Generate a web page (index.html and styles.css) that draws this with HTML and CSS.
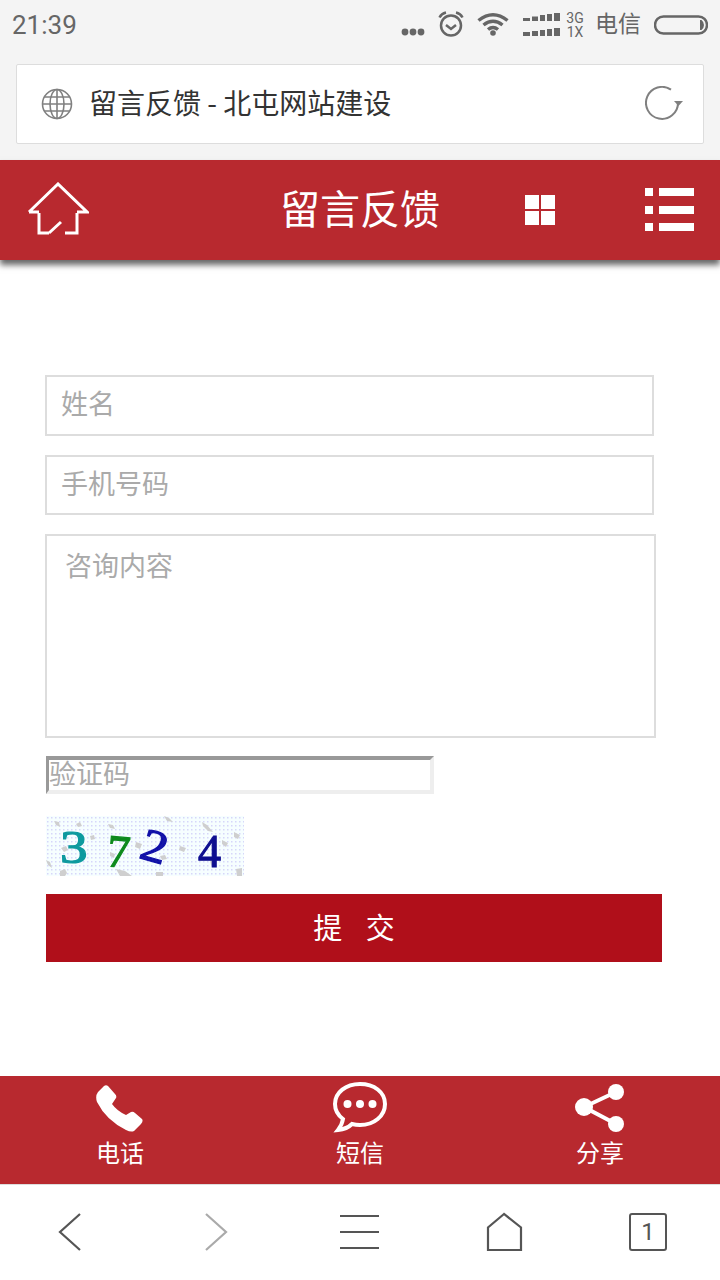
FILE: index.html
```html
<!doctype html>
<html lang="zh-CN">
  <head>
    <meta charset="UTF-8" />
    <meta name="viewport" content="width=device-width, initial-scale=1.0" />
    <title>留言反馈 - 北屯网站建设</title>
    <link rel="stylesheet" href="styles.css">
  </head>
  <body>
    <div class="chrome">
      <div class="status-bar">
        <span class="time">21:39</span>
        <div class="status-icons">
          <svg class="ic-dots" width="24" height="8" viewBox="0 0 24 8"><circle cx="4" cy="4" r="3.4"/><circle cx="12" cy="4" r="3.4"/><circle cx="20" cy="4" r="3.4"/></svg>
          <svg class="ic-alarm" width="26" height="26" viewBox="0 0 26 26"><circle cx="13" cy="14.500" r="10"/><path d="M8 14l5 4 5-4"/><path d="M1.500 6.500Q3.500 2.500 8 1.500M24.500 6.500Q22.500 2.500 18 1.500"/></svg>
          <svg class="ic-wifi" width="32" height="24" viewBox="0 0 32 24"><path d="M1.500 8.500Q16-3 30.500 8.500M6.500 13Q16 5.500 25.500 13M11 17.500Q16 13.500 21 17.500"/><circle cx="16" cy="21" r="2.800"/></svg>
          <svg class="ic-signal" width="38" height="24" viewBox="0 0 38 24"><path d="M0 8h7V5H0zM9 8h6V3.500H9zM17 8h5V2h-5zM24 8h5V1h-5zM31 8h6V0h-6zM0 23h7v-4H0zM9 23h6v-5H9zM17 23h5v-6h-5zM24 23h5v-7h-5zM31 23h6v-8h-6z"/></svg>
          <span class="net"><span>3G</span><span>1X</span></span>
          <span class="carrier">电信</span>
          <svg class="ic-battery" width="54" height="20" viewBox="0 0 54 20"><rect x="1" y="1.500" width="52" height="17" rx="8.500"/><path class="fill" d="M46 5h1.500Q50 7 50 10t-2.500 5H46z"/></svg>
        </div>
      </div>
      <div class="url-bar">
        <svg class="ic-globe" width="32" height="32" viewBox="0 0 32 32"><circle cx="16" cy="16" r="14.500"/><ellipse cx="16" cy="16" rx="7" ry="14.500"/><path d="M16 1.500v29M1.500 16h29M3.500 9h25M3.500 23h25"/></svg>
        <span class="url-title">留言反馈 - 北屯网站建设</span>
        <svg class="ic-reload" width="38" height="36" viewBox="0 0 38 36"><path d="M33 17A16 16 0 1 1 26 3.700"/><path class="fill" d="M29 15h9l-4.500 5z"/></svg>
      </div>
    </div>

    <header class="top-bar">
      <svg class="ic-home" width="62" height="54" viewBox="0 0 62 54"><path d="M22 51l12-11M12 31v20h10M50 31v20H38M2 30h10M50 30h10L31 2 2 30"/></svg>
      <h1>留言反馈</h1>
      <svg class="ic-grid" width="30" height="30" viewBox="0 0 30 30"><path d="M0 0h14v14H0zM16 0h14v14H16zM0 16h14v14H0zM16 16h14v14H16z"/></svg>
      <svg class="ic-list" width="50" height="44" viewBox="0 0 50 44"><path d="M0 0h8v8H0zM14 0h35v8H14zM0 18h8v8H0zM14 18h35v8H14zM0 35h8v8H0zM14 35h35v8H14z"/></svg>
    </header>

    <main class="content">
      <form class="feedback">
        <input class="field field-name" type="text" placeholder="姓名" />
        <input class="field field-phone" type="text" placeholder="手机号码" />
        <textarea class="field field-msg" placeholder="咨询内容"></textarea>
        <input class="field-code" type="text" placeholder="验证码" />
        <svg class="captcha" width="198" height="60" viewBox="0 0 198 60">
          <defs>
            <pattern id="dots" width="4" height="4" patternUnits="userSpaceOnUse">
              <rect width="4" height="4" fill="#f6feff"/>
              <rect x="1" y="1" width="1.500" height="1.500" fill="#d6d6fa"/>
            </pattern>
            <filter id="soft"><feGaussianBlur stdDeviation="0.6"/></filter>
          </defs>
          <rect width="198" height="60" fill="url(#dots)"/>
          <g class="noise" filter="url(#soft)">
            <path d="M8 5l5 1 1 5-4-2zM0 44l4 2 2 6-4-3zM14 55l5-2 2 4-2 3h-5zM15 32l5-2 2 4-4 2zM44 20l4-1 1 4-4 1zM62 8l5 1 2 4-5-1zM70 53l9 2 7 5H74zM64 36l5 2-1 4-4-2zM90 26l6 2-2 5-5-2zM118 0l5 2 4 4-6-1zM114 40l5-1 2 4-5 1zM134 30l6 2-2 4-5-2zM156 6l5 3 6 7-5-1-5-5zM176 24l6 3-2 4-4-3zM188 16l6 3-2 4-4-2zM164 44l5 2 1 5-5-2zM190 53l6-1v8h-5zM110 56h7v4h-7zM30 8l4-2 2 4-4 1z"/>
          </g>
          <g class="digits" filter="url(#soft)">
            <text class="d1" x="15" y="47" transform="translate(-4 0) scale(1.2 1)">3</text>
            <text class="d2" x="61" y="51" transform="rotate(5 72 36)">7</text>
            <text class="d3" x="99" y="47" transform="rotate(16 113 30) translate(-18 0) scale(1.15 1)">2</text>
            <text class="d4" x="152" y="51">4</text>
          </g>
        </svg>
        <button class="submit" type="button">提 交</button>
      </form>
    </main>

    <nav class="tab-bar">
      <a class="tab">
        <svg class="ic-phone" width="48" height="48" viewBox="0 0 48 48"><path d="M8 1Q10-.5 12 1l7 8q2 2 1 4l-4 6q5 7 14 11l5-3q2-1 4 1l7 6q1.500 2-1 5l-7 7q-3 1.500-8-1Q10 35 1 17q-2-6 1-10z"/></svg>
        <span>电话</span>
      </a>
      <a class="tab">
        <svg class="ic-chat" width="56" height="52" viewBox="0 0 56 52"><path class="outline" d="M28 2C14 2 3 10.500 3 22c0 7 4 12 8 15q-1 6-5 11 9-1 14-6 4 1 8 1c14 0 25-9 25-21S42 2 28 2z"/><circle cx="15.500" cy="22" r="4"/><circle cx="28" cy="22" r="4"/><circle cx="40.500" cy="22" r="4"/></svg>
        <span>短信</span>
      </a>
      <a class="tab">
        <svg class="ic-share" width="50" height="50" viewBox="0 0 50 50"><path class="link" d="M41 9L9 24l32 17"/><circle cx="9" cy="24" r="9"/><circle cx="41" cy="9" r="8"/><circle cx="41" cy="41" r="8"/></svg>
        <span>分享</span>
      </a>
    </nav>

    <nav class="browser-bar">
      <svg class="ic-back" width="24" height="40" viewBox="0 0 24 40"><path d="M22 2L2 20l20 18"/></svg>
      <svg class="ic-forward" width="24" height="40" viewBox="0 0 24 40"><path d="M2 2l20 18L2 38"/></svg>
      <svg class="ic-menu" width="40" height="36" viewBox="0 0 40 36"><path d="M1 2h39M1 18h39M1 34h39"/></svg>
      <svg class="ic-house" width="38" height="40" viewBox="0 0 38 40"><path d="M18 2L2 15.500V38h33V15.500z"/></svg>
      <div class="tab-count">1</div>
    </nav>
  </body>
</html>
```

FILE: styles.css
```css
* {
  box-sizing: border-box;
}

body {
  margin: 0;
  width: 720px;
  height: 1280px;
  display: flex;
  flex-direction: column;
  overflow: hidden;
  background-color: #fff;
  font-family: "Noto Sans CJK SC", Roboto, sans-serif;
}

svg {
  display: block;
  flex: none;
}

/* browser chrome */
.chrome {
  height: 160px;
  background-color: #f4f4f4;
  flex: none;
}

.status-bar {
  height: 50px;
  padding: 0 12px;
  display: flex;
  justify-content: space-between;
  align-items: center;
  color: #666;
}

.time {
  font-family: Roboto, sans-serif;
  font-size: 26px;
}

.status-icons {
  display: flex;
  align-items: center;
}

.status-icons svg {
  fill: #666;
}

.ic-dots {
  margin: 14px 0 0 0;
}

.status-icons .ic-alarm,
.status-icons .ic-wifi {
  fill: none;
  stroke: #666;
  stroke-width: 2.5;
}

.status-icons .ic-wifi {
  stroke-width: 3.5;
}

.status-icons .ic-wifi circle {
  fill: #666;
  stroke: none;
}

.ic-alarm {
  margin: -2px 0 0 13px;
}

.ic-wifi {
  margin: -3px 0 0 13px;
}

.ic-signal {
  margin: 0 0 0 14px;
}

.net {
  width: 18px;
  margin-left: 5px;
  display: flex;
  flex-direction: column;
  font-family: Roboto, sans-serif;
  font-size: 14px;
  line-height: 14px;
  text-align: center;
}

.carrier {
  margin: 0 0 6px 11px;
  font-size: 23px;
  line-height: 28px;
}

.status-icons .ic-battery {
  margin-left: 13px;
  fill: none;
  stroke: #666;
  stroke-width: 2.5;
}

.status-icons .ic-battery .fill {
  fill: #666;
  stroke: none;
}

.url-bar {
  height: 80px;
  margin: 14px 16px 0;
  padding: 0 20px 0 24px;
  display: flex;
  align-items: center;
  background-color: #fff;
  border: 1px solid #ddd;
  border-radius: 2px;
}

.ic-globe {
  fill: none;
  stroke: #808080;
  stroke-width: 1.6;
}

.url-title {
  margin: 0 0 5px 16px;
  flex: 1;
  font-size: 28px;
  color: #333;
}

.ic-reload {
  fill: none;
  stroke: #808080;
  stroke-width: 2;
}

.ic-reload .fill {
  fill: #808080;
  stroke: none;
}

/* red header */
.top-bar {
  height: 100px;
  flex: none;
  padding-left: 27px;
  display: flex;
  align-items: center;
  background-color: #b8292f;
  box-shadow: 0 5px 6px rgba(0, 0, 0, 0.6);
  color: #fff;
}

.top-bar h1 {
  width: 160px;
  margin: 0 0 0 191px;
  font-size: 40px;
  font-weight: 400;
  line-height: 94px;
  height: 100px;
  white-space: nowrap;
}

.ic-home {
  margin-top: -2px;
  fill: none;
  stroke: #fff;
  stroke-width: 3;
}

.ic-grid {
  margin-left: 85px;
  fill: #fff;
}

.ic-list {
  margin-left: 90px;
  fill: #fff;
}

/* form */
.content {
  flex: 1;
  padding: 115px 0 0 45px;
}

.feedback {
  display: flex;
  flex-direction: column;
  align-items: flex-start;
}

.field {
  display: block;
  border: 2px solid #ddd;
  background-color: #fff;
  font-family: inherit;
  font-size: 27px;
  outline: none;
  border-radius: 0;
}

.field::placeholder,
.field-code::placeholder {
  color: #aaa;
  opacity: 1;
}

.field-name {
  width: 609px;
  height: 61px;
  margin-bottom: 19px;
  padding: 0 14px 6px;
}

.field-phone {
  width: 609px;
  height: 60px;
  margin-bottom: 19px;
  padding: 0 14px 6px;
}

.field-msg {
  width: 611px;
  height: 204px;
  margin-bottom: 18px;
  padding: 9px 18px;
  resize: none;
}

.field-code {
  width: 388px;
  height: 38px;
  margin-left: 1px;
  padding: 0 0 6px 0;
  border-style: solid;
  border-width: 4px 4px 4px 3px;
  border-color: #999 #eee #eee #999;
  background-color: #fff;
  font-family: inherit;
  font-size: 27px;
  outline: none;
}

.captcha {
  margin: 22px 0 18px 1px;
}

.noise {
  fill: #cfcfcf;
}

.digits text {
  font-family: "Liberation Serif", serif;
  font-size: 46px;
  font-weight: 400;
  stroke-width: 1.2;
}

.d1 {
  fill: #0f9a9f;
  stroke: #0f9a9f;
}

.d2 {
  fill: #0b8a1f;
  stroke: #0b8a1f;
}

.d3 {
  fill: #1212a8;
  stroke: #1212a8;
}

.d4 {
  fill: #0a0a90;
  stroke: #0a0a90;
}

.submit {
  width: 616px;
  height: 68px;
  margin-left: 1px;
  padding: 0 0 5px;
  border: none;
  border-radius: 0;
  background-color: #b00f1a;
  color: #fff;
  font-family: inherit;
  font-size: 29px;
  word-spacing: 17px;
}

/* bottom red bar */
.tab-bar {
  height: 109px;
  flex: none;
  display: grid;
  grid-template-columns: repeat(3, 240px);
  background-color: #b8292f;
  border-bottom: 1px solid #ddd;
}

.tab {
  height: 108px;
  padding-top: 6px;
  display: flex;
  flex-direction: column;
  align-items: center;
  color: #fff;
  font-size: 24px;
  line-height: 32px;
}

.tab svg {
  height: 52px;
  fill: #fff;
}

.tab .ic-phone {
  margin-top: 3px;
  height: 48px;
  margin-bottom: 1px;
}

.ic-chat .outline {
  fill: none;
  stroke: #fff;
  stroke-width: 4;
}

.ic-share .link {
  fill: none;
  stroke: #fff;
  stroke-width: 4;
}

.tab span {
  margin-top: 2px;
}

/* browser bottom bar */
.browser-bar {
  height: 95px;
  flex: none;
  display: flex;
  align-items: center;
  padding: 0 0 2px 58px;
  background-color: #fff;
}

.browser-bar svg {
  fill: none;
  stroke: #555;
  stroke-width: 2.2;
}

.browser-bar .ic-forward {
  margin-left: 122px;
  stroke: #aaa;
}

.ic-menu {
  margin-left: 111px;
}

.ic-house {
  margin-left: 107px;
}

.tab-count {
  width: 38px;
  height: 38px;
  margin-left: 105px;
  border: 2.500px solid #555;
  border-radius: 3px;
  font-family: Roboto, sans-serif;
  font-size: 24px;
  line-height: 34px;
  text-align: center;
  color: #555;
}
```
